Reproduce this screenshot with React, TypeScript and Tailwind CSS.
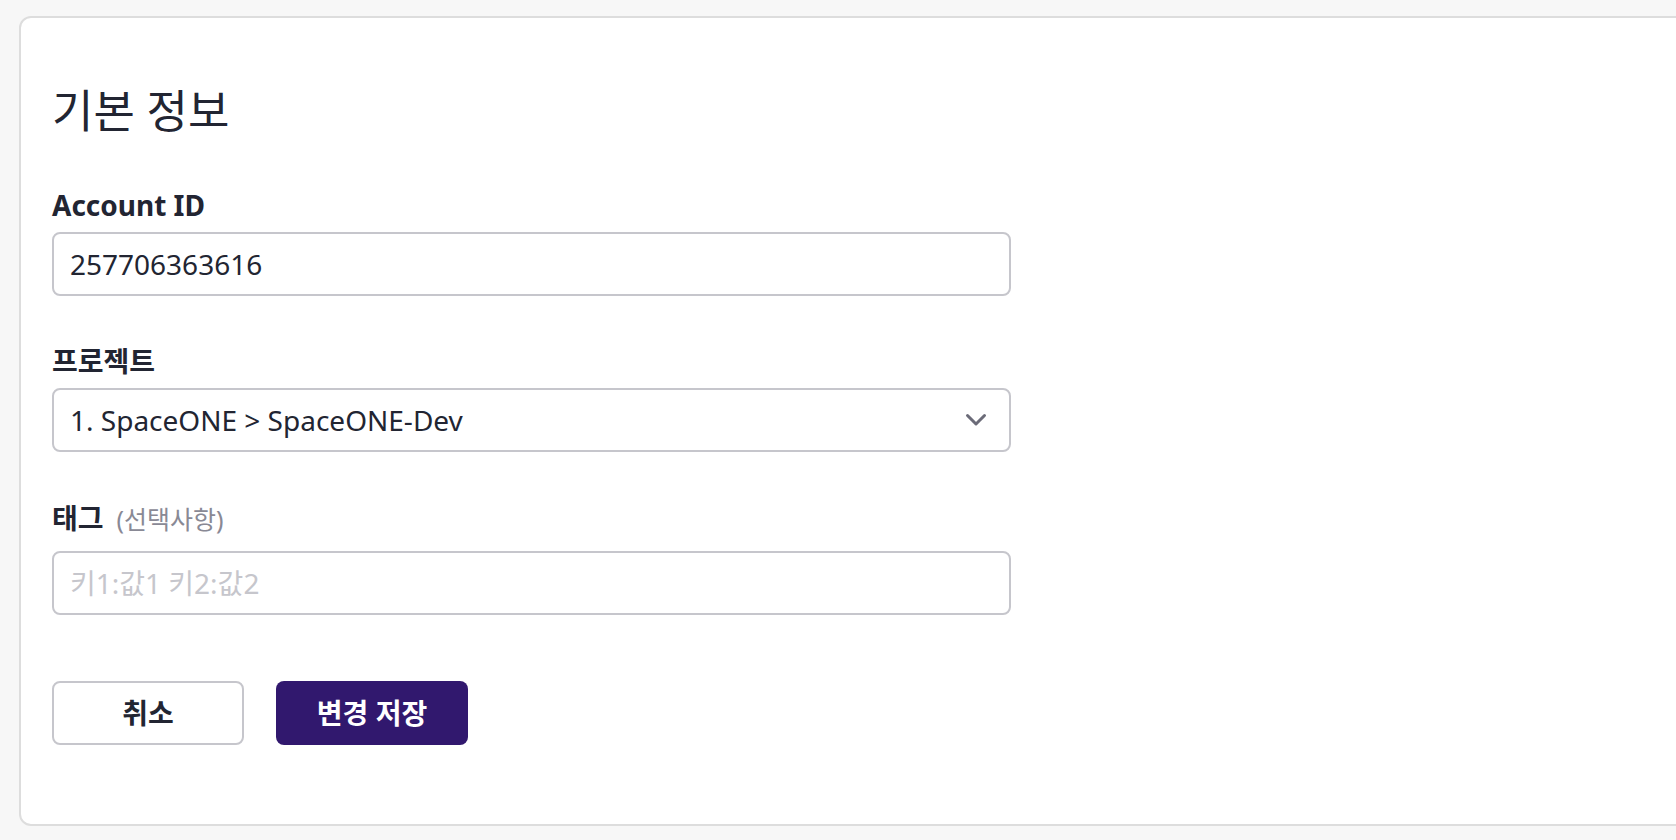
import React from 'react';

const FONT = '"Noto Sans", "Noto Sans CJK KR", sans-serif';

function Label({ children, className = '' }: { children: React.ReactNode; className?: string }) {
  return (
    <div className={`flex items-baseline h-[40px] leading-[40px] text-[28px] text-[#222532] font-bold ${className}`}>
      {children}
    </div>
  );
}

function ChevronDown() {
  return (
    <svg width="22" height="14" viewBox="0 0 22 14" fill="none">
      <polyline
        points="2.5,2.5 11,11 19.5,2.5"
        stroke="#6b6b78"
        strokeWidth="3"
        strokeLinecap="round"
        strokeLinejoin="round"
      />
    </svg>
  );
}

export default function App() {
  return (
    <div
      className="h-[840px] overflow-hidden bg-[#f7f7f7] pt-[16px] pl-[19px]"
      style={{ fontFamily: FONT }}
    >
      <div className="h-[810px] mr-[-24px] rounded-[12px] border-2 border-[#dddddd] bg-white pl-[31px] pt-[63px]">
        {/* 제목 */}
        <h2 className="h-[60px] leading-[60px] text-[45px] font-normal text-[#222532]">기본 정보</h2>

        {/* Account ID */}
        <Label className="mt-[44px]">Account ID</Label>
        <div className="mt-[7px] flex h-[64px] w-[959px] items-center rounded-[8px] border-2 border-[#c6c6cc] px-[16px] text-[28px] text-[#222532]">
          257706363616
        </div>

        {/* 프로젝트 */}
        <Label className="mt-[45px]">프로젝트</Label>
        <div className="mt-[7px] flex h-[64px] w-[959px] items-center justify-between rounded-[8px] border-2 border-[#c6c6cc] pl-[16px] pr-[22px] text-[28px] text-[#222532]">
          <span>1. SpaceONE &gt; SpaceONE-Dev</span>
          <ChevronDown />
        </div>

        {/* 태그 */}
        <Label className="mt-[46px]">
          <span>태그</span>
          <span className="ml-[13px] text-[25px] font-normal text-[#898995]">(선택사항)</span>
        </Label>
        <input
          className="mt-[13px] block h-[64px] w-[959px] rounded-[8px] border-2 border-[#c6c6cc] px-[16px] text-[28px] text-[#222532] outline-none placeholder:text-[#c6c6cc]"
          placeholder="키1:값1 키2:값2"
          style={{ fontFamily: FONT }}
        />

        {/* 버튼 */}
        <div className="mt-[66px] flex gap-[32px]">
          <button
            className="h-[64px] w-[192px] rounded-[8px] border-2 border-[#c6c6cc] bg-white text-[28px] font-bold text-[#222532]"
            style={{ fontFamily: FONT }}
          >
            취소
          </button>
          <button
            className="h-[64px] w-[192px] rounded-[8px] bg-[#31186e] text-[28px] font-bold text-white"
            style={{ fontFamily: FONT }}
          >
            변경 저장
          </button>
        </div>
      </div>
    </div>
  );
}
